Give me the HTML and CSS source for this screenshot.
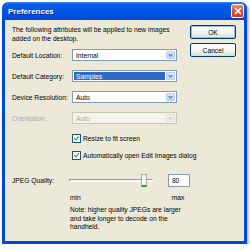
FILE: index.html
```html
<!DOCTYPE html>
<html lang="en">

<head>
	<meta charset="UTF-8">
	<meta name="viewport" content="width=device-width, initial-scale=1.0">
	<link rel="stylesheet" href="styles.css">
	<title>Preferences</title>
</head>

<body>
	<div class="window">
		<div class="titlebar">
			<span class="title">Preferences</span>
			<span class="close">
				<svg width="8" height="8" viewBox="0 0 8 8">
					<path d="M1 1 L7 7 M7 1 L1 7" stroke="#fff" stroke-width="1.6" />
				</svg>
			</span>
		</div>
		<div class="body">
			<div class="main">
				<p class="intro">The following attributes will be applied to new images<br>added on the desktop.</p>

				<div class="fields">
					<label class="label">Default Location:</label>
					<div class="select"><span class="value">Internal</span><span class="arrow"></span></div>

					<label class="label">Default Category:</label>
					<div class="select"><span class="value selected">Samples</span><span class="arrow"></span></div>

					<label class="label">Device Resolution:</label>
					<div class="select"><span class="value">Auto</span><span class="arrow"></span></div>

					<label class="label disabled">Orientation:</label>
					<div class="select disabled"><span class="value">Auto</span><span class="arrow"></span></div>
				</div>

				<div class="checks">
					<div class="check"><span class="box"></span>Resize to fit screen</div>
					<div class="check"><span class="box"></span>Automatically open Edit Images dialog</div>
				</div>

				<div class="quality">
					<span class="label">JPEG Quality:</span>
					<div class="slider">
						<div class="track"></div>
						<div class="thumb"></div>
					</div>
					<div class="textbox">80</div>
				</div>
				<div class="minmax"><span>min</span><span>max</span></div>

				<p class="note">Note: higher quality JPEGs are larger<br>and take longer to decode on the<br>handheld.</p>
			</div>
			<div class="buttons">
				<button class="btn default" type="button">OK</button>
				<button class="btn" type="button">Cancel</button>
			</div>
		</div>
	</div>
</body>

</html>
```

FILE: styles.css
```css
* {
	box-sizing: border-box;
}

body {
	margin: 0;
	background: #fff;
	font-family: "Liberation Sans", Arial, sans-serif;
	font-size: 6.7px;
	color: #000;
}

.window {
	width: 245px;
	height: 242px;
	margin: 2px 0 0 2px;
	box-shadow: 2px 2px 2px rgba(0, 0, 0, 0.25);
	border-radius: 6px 6px 0 0;
	display: flex;
	flex-direction: column;
}

.titlebar {
	height: 18px;
	display: flex;
	align-items: center;
	justify-content: space-between;
	padding: 0 3px 0 6px;
	border-radius: 6px 6px 0 0;
	background: linear-gradient(to bottom, #3b8cf7 0%, #0a5de9 12%, #0054e3 55%, #0049d6 100%);
}

.title {
	color: #fff;
	font-weight: bold;
	font-size: 8px;
	text-shadow: 1px 1px 0 #0a2a8a;
}

.close {
	width: 13px;
	height: 14px;
	display: flex;
	align-items: center;
	justify-content: center;
	border: 1px solid #fff;
	border-radius: 2px;
	background: linear-gradient(to bottom, #f08a6a 0%, #e0553a 45%, #cc3a20 100%);
}

.body {
	flex: 1;
	display: flex;
	background: #ece9d8;
	border: 3px solid #0048d8;
	border-top: none;
}

.main {
	width: 185px;
	padding: 5px 0 0 7px;
	white-space: nowrap;
}

.intro {
	margin: 0;
	line-height: 9px;
}

.fields {
	display: grid;
	grid-template-columns: 60px 105px;
	grid-auto-rows: 12px;
	row-gap: 9px;
	align-items: center;
	margin-top: 6px;
}

.label.disabled {
	color: #aca899;
}

.select {
	height: 12px;
	display: flex;
	align-items: center;
	border: 1px solid #7f9db9;
	background: #fff;
	padding: 1px;
}

.value {
	flex: 1;
	height: 100%;
	display: flex;
	align-items: center;
	padding-left: 2px;
}

.value.selected {
	background: #316ac5;
	color: #fff;
	margin-right: 1px;
}

.arrow {
	width: 9px;
	height: 100%;
	border-radius: 1px;
	background: linear-gradient(to bottom, #e0e9fd, #c1d3fb);
	border: 1px solid #b9cdf6;
	position: relative;
}

.arrow::after {
	content: "";
	position: absolute;
	left: 2px;
	top: 1px;
	width: 2px;
	height: 2px;
	border-right: 1px solid #4d6185;
	border-bottom: 1px solid #4d6185;
	transform: rotate(45deg);
}

.select.disabled {
	border-color: #c9c7ba;
	background: #f5f4ea;
	color: #aca899;
}

.select.disabled .arrow {
	background: #f1efe5;
	border-color: #e2e0d5;
}

.select.disabled .arrow::after {
	border-color: #c9c7ba;
}

.checks {
	display: flex;
	flex-direction: column;
	gap: 6px;
	margin-top: 9px;
	padding-left: 60px;
}

.check {
	height: 11px;
	display: flex;
	align-items: center;
	gap: 2px;
}

.box {
	flex-shrink: 0;
	width: 9px;
	height: 9px;
	border: 1px solid #1c5180;
	background: #fff;
	position: relative;
}

.box::after {
	content: "";
	position: absolute;
	left: 2px;
	top: 0px;
	width: 2px;
	height: 4px;
	border-right: 1.5px solid #21a121;
	border-bottom: 1.5px solid #21a121;
	transform: rotate(40deg);
}

.quality {
	display: flex;
	align-items: center;
	height: 13px;
	margin-top: 13px;
}

.quality .label {
	width: 60px;
}

.slider {
	width: 99px;
	height: 13px;
	position: relative;
	display: flex;
	align-items: center;
	padding: 0 3px;
}

.track {
	flex: 1;
	height: 3px;
	border-radius: 1px;
	border-top: 1px solid #9d9c99;
	border-left: 1px solid #9d9c99;
	border-bottom: 1px solid #fff;
	border-right: 1px solid #fff;
	background: #f4f3ee;
}

.thumb {
	position: absolute;
	left: 75px;
	top: 0;
	width: 6px;
	height: 13px;
	border: 1px solid #a9a89f;
	border-bottom: 2px solid #21a121;
	border-radius: 1px;
	background: linear-gradient(to right, #fff, #f0efe8);
}

.textbox {
	width: 24px;
	height: 13px;
	margin-left: 12px;
	border: 1px solid #7f9db9;
	background: #fff;
	padding: 2px 0 0 3px;
	line-height: 8px;
}

.minmax {
	display: flex;
	gap: 91px;
	height: 8px;
	line-height: 8px;
	margin-top: 7px;
	padding-left: 58px;
}

.note {
	margin: 4px 0 0 58px;
	line-height: 8.5px;
}

.buttons {
	width: 46px;
	display: flex;
	flex-direction: column;
	gap: 4px;
	padding-top: 5px;
}

.btn {
	height: 14px;
	padding: 0;
	font-family: inherit;
	font-size: 6.7px;
	color: #000;
	border: 1px solid #003c74;
	border-radius: 2px;
	background: linear-gradient(to bottom, #fff 0%, #f3f3ef 60%, #dcdbd2 100%);
}

.btn.default {
	box-shadow: inset 0 0 0 1px #9db9eb;
}
```
